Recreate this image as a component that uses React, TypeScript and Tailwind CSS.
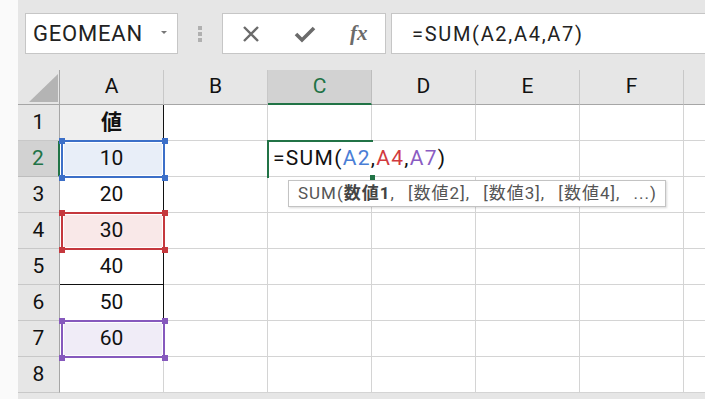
const font = { fontFamily: 'Roboto, "Noto Sans CJK JP", sans-serif' };

const cols = ["A", "B", "C", "D", "E", "F"];
const values = ["値", "10", "20", "30", "40", "50", "60", ""];

function CrossIcon() {
  return (
    <svg width="20" height="20" viewBox="0 0 20 20" aria-hidden="true">
      <path d="M3 3 L17 17 M17 3 L3 17" stroke="#6b6b6b" strokeWidth="2.4" />
    </svg>
  );
}

function CheckIcon() {
  return (
    <svg width="22" height="20" viewBox="0 0 22 20" aria-hidden="true">
      <path d="M2 10 L8 16 L20 4" stroke="#6b6b6b" strokeWidth="3.6" fill="none" />
    </svg>
  );
}

function Handle({ className }: { className: string }) {
  return <span className={`absolute h-[6px] w-[6px] ${className}`} />;
}

function RangeBox({
  top,
  border,
  fill,
  handle,
}: {
  top: string;
  border: string;
  fill: string;
  handle: string;
}) {
  return (
    <div className={`absolute left-[43px] h-[38px] w-[104px] ${top}`}>
      <div className={`absolute inset-0 border-2 ${border} ${fill}`}>
        <div className="h-full w-full border border-white" />
      </div>
      <Handle className={`-left-[2px] -top-[2px] ${handle}`} />
      <Handle className={`-right-[3px] -top-[2px] ${handle}`} />
      <Handle className={`-left-[2px] -bottom-[3px] ${handle}`} />
      <Handle className={`-right-[3px] -bottom-[3px] ${handle}`} />
    </div>
  );
}

export default function App() {
  return (
    <div className="flex h-[399px] w-[705px] overflow-hidden bg-white" style={font}>
      <div className="w-[18px] shrink-0 bg-[#fafafa]" />
      <div className="flex flex-1 flex-col bg-[#e6e6e6]">
        {/* formula bar */}
        <div className="flex h-[70px] items-start pt-[13px] pl-[7px]">
          <div className="flex h-[41px] w-[153px] items-center justify-between border border-[#c6c6c6] bg-white pl-[7px] pr-[10px]">
            <span className="text-[22px] tracking-[0.8px] text-[#222]">GEOMEAN</span>
            <span className="mb-[2px] h-0 w-0 border-x-[3px] border-t-[3px] border-x-transparent border-t-[#777]" />
          </div>
          <div className="ml-[20px] flex h-[41px] flex-col justify-center gap-[2px]">
            <span className="h-[4px] w-[4px] bg-[#b0b0b0]" />
            <span className="h-[4px] w-[4px] bg-[#b0b0b0]" />
            <span className="h-[4px] w-[4px] bg-[#b0b0b0]" />
          </div>
          <div className="ml-[20px] flex h-[41px] w-[164px] items-center border border-[#c6c6c6] bg-white">
            <span className="ml-[18px] flex w-[20px] justify-center">
              <CrossIcon />
            </span>
            <span className="ml-[33px] flex w-[22px] justify-center">
              <CheckIcon />
            </span>
            <span
              className="ml-[34px] text-[21px] font-bold italic text-[#6b6b6b]"
              style={{ fontFamily: '"Liberation Serif", serif' }}
            >
              fx
            </span>
          </div>
          <div className="ml-[5px] flex h-[41px] flex-1 items-center border border-r-0 border-[#c6c6c6] bg-white pl-[20px]">
            <span className="text-[20px] tracking-[1.7px] text-[#222]">=SUM(A2,A4,A7)</span>
          </div>
        </div>

        {/* sheet */}
        <div className="relative flex-1">
          <div className="grid grid-cols-[42px_repeat(6,104px)_1fr] grid-rows-[35px_repeat(8,36px)_1fr] text-[21px]">
            <div className="relative border-r border-b border-[#a6a6a6] bg-[#e6e6e6]">
              <svg className="absolute left-[11px] top-[4px]" width="29" height="28" viewBox="0 0 29 28">
                <path d="M29 0 L29 28 L0 28 Z" fill="#b4b4b4" />
              </svg>
            </div>
            {cols.map((c) => (
              <div
                key={c}
                className={`flex items-center justify-center border-r ${
                  c === "C"
                    ? "border-b-2 border-r-[#bdbdbd] border-b-[#217346] bg-[#d2d2d2] text-[#217346]"
                    : "border-b border-r-[#c8c8c8] border-b-[#a6a6a6] bg-[#e6e6e6] text-[#111]"
                }`}
              >
                {c}
              </div>
            ))}
            <div className="border-b border-[#a6a6a6] bg-[#e6e6e6]" />

            {values.map((v, i) => {
              const r = i + 1;
              const sel = r === 2;
              return [
                <div
                  key={`h${r}`}
                  className={`flex items-center justify-center border-b ${
                    sel
                      ? "border-r-2 border-r-[#217346] border-b-[#bdbdbd] bg-[#d2d2d2] text-[#217346]"
                      : "border-r border-r-[#a6a6a6] border-b-[#c8c8c8] bg-[#e6e6e6] text-[#111]"
                  }`}
                >
                  {r}
                </div>,
                <div
                  key={`a${r}`}
                  className={`flex items-center justify-center border-r text-[#111] ${
                    r <= 6 ? "border-r-[#111]" : "border-r-[#d4d4d4]"
                  } ${r === 5 ? "border-b border-b-[#111]" : "border-b border-b-[#d4d4d4]"} ${
                    r === 1 ? "bg-[#efefef] font-bold" : "bg-white"
                  }`}
                >
                  <span className="relative z-10">{v}</span>
                </div>,
                ...cols.slice(1).map((c) => (
                  <div
                    key={`${c}${r}`}
                    className={`relative bg-white ${
                      sel && (c === "C" || c === "D") ? "" : "border-r border-[#d4d4d4]"
                    } border-b border-b-[#d4d4d4]`}
                  >
                    {sel && c === "C" ? (
                      <span className="absolute left-[5px] top-[2px] z-20 whitespace-nowrap tracking-[1.3px] text-[#111]">
                        =SUM(<span className="text-[#4a7ed6]">A2</span>,
                        <span className="text-[#d13a3f]">A4</span>,
                        <span className="text-[#8a5cc2]">A7</span>)
                      </span>
                    ) : null}
                  </div>
                )),
                <div key={`z${r}`} className="border-b border-[#d4d4d4] bg-white" />,
              ];
            })}
            <div className="border-r border-[#a6a6a6] bg-[#e6e6e6]" />
            {cols.map((c) => (
              <div key={`l${c}`} className="border-r border-[#d4d4d4] bg-white" />
            ))}
            <div className="bg-white" />
          </div>

          {/* reference ranges */}
          <div className="absolute top-[70px] left-0">
            <RangeBox top="top-[0px]" border="border-[#3c6fc8]" fill="bg-[#e8eef8]" handle="bg-[#3c6fc8]" />
            <RangeBox top="top-[72px]" border="border-[#c5383d]" fill="bg-[#f9e8e8]" handle="bg-[#c5383d]" />
            <RangeBox top="top-[180px]" border="border-[#8659bd]" fill="bg-[#f0ecf7]" handle="bg-[#8659bd]" />
          </div>

          {/* active cell */}
          <div className="absolute left-[249px] top-[70px] h-[38px] w-[106px] border-t-2 border-l-2 border-[#217346]" />
          <span className="absolute left-[352px] top-[105px] h-[5px] w-[5px] bg-[#217346]" />

          {/* tooltip */}
          <div className="absolute left-[270px] top-[110px] z-30 flex h-[27px] w-[378px] items-center whitespace-nowrap border border-[#c3c3c3] bg-white pl-[9px] text-[17px] tracking-[1px] text-[#555] shadow-[1px_1px_2px_rgba(0,0,0,0.15)] [word-spacing:8px]">
            SUM(<span className="font-bold text-[#444]">数値1</span>, [数値2], [数値3], [数値4], ...)
          </div>
        </div>
      </div>
    </div>
  );
}
